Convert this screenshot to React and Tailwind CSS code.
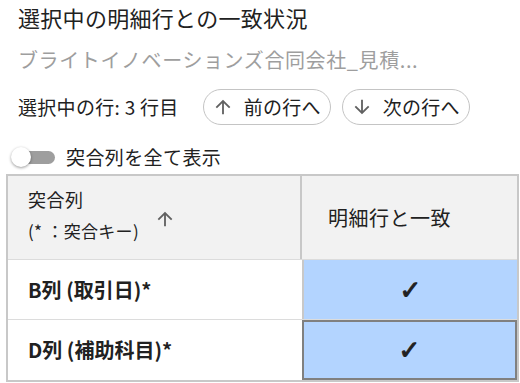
import React from 'react';

const ArrowUp = ({ className }) => (
  <svg viewBox="0 0 24 24" className={className} fill="currentColor">
    <path d="M4 12l1.41 1.41L11 7.83V20h2V7.83l5.58 5.59L20 12l-8-8-8 8z" />
  </svg>
);

const ArrowDown = ({ className }) => (
  <svg viewBox="0 0 24 24" className={className} fill="currentColor">
    <path d="M20 12l-1.41-1.41L13 16.17V4h-2v12.17l-5.58-5.59L4 12l8 8 8-8z" />
  </svg>
);

const rows = ['B列 (取引日)*', 'D列 (補助科目)*'];

export default function App() {
  return (
    <div className="w-[520px] h-[383px] bg-white text-[#212121] overflow-hidden font-['Noto_Sans_CJK_JP',sans-serif]">
      <div className="pl-[18px] pt-[2px]">
        <h1 className="text-[22px] leading-[30px] tracking-[0.3px]">選択中の明細行との一致状況</h1>
        <p className="mt-[14px] text-[20px] leading-[28px] tracking-[0.6px] text-[#9e9e9e]">ブライトイノベーションズ合同会社_見積...</p>
        <div className="mt-[15px] flex items-center">
          <span className="text-[19px] leading-[26px] tracking-[0.3px]">選択中の行: 3 行目</span>
          <button className="ml-[24px] h-[36px] w-[128px] flex items-center pl-[8px] gap-[10px] rounded-full border border-[#c4c4c4] text-[19px] tracking-[0.3px]">
            <ArrowUp className="w-[22px] h-[22px] text-[#616161]" />
            <span>前の行へ</span>
          </button>
          <button className="ml-[11px] h-[36px] w-[128px] flex items-center pl-[8px] gap-[10px] rounded-full border border-[#c4c4c4] text-[19px] tracking-[0.3px]">
            <ArrowDown className="w-[22px] h-[22px] text-[#616161]" />
            <span>次の行へ</span>
          </button>
        </div>
      </div>
      <div className="mt-[20px] ml-[10px] flex items-center h-[24px]">
        <div className="relative w-[46px] h-[20px] flex items-center">
          <div className="ml-[8px] w-[37px] h-[13px] rounded-full bg-[#9e9e9e]" />
          <div className="absolute left-[1px] top-[0px] w-[20px] h-[20px] rounded-full bg-white shadow-[0_1px_3px_rgba(0,0,0,0.4)]" />
        </div>
        <span className="ml-[10px] text-[19px] tracking-[0.4px]">突合列を全て表示</span>
      </div>
      <div className="mt-[5px] ml-[6px] w-[513px] border-2 border-[#c8c8c8]">
        <div className="grid grid-cols-[294px_1fr] bg-[#f2f2f2] h-[84px] border-b border-[#dcdcdc]">
          <div className="flex items-center pl-[20px] pb-[6px] border-r-2 border-[#c8c8c8]">
            <div className="leading-[32px]">
              <div className="text-[18px] tracking-[0.5px]">突合列</div>
              <div className="text-[17px] tracking-[0.3px]">(* ：突合キー)</div>
            </div>
            <ArrowUp className="ml-[15px] mt-[8px] w-[22px] h-[22px] text-[#616161]" />
          </div>
          <div className="flex items-center pl-[26px] text-[20px] tracking-[0.5px]">明細行と一致</div>
        </div>
        {rows.map((r, i) => (
          <div key={r} className={`grid grid-cols-[294px_1fr] h-[60px] ${i === 0 ? 'border-b border-[#dcdcdc]' : ''}`}>
            <div className="flex items-center pl-[20px] text-[20px] font-bold">{r}</div>
            <div className={`flex items-center justify-center bg-[#b3d4ff] border-l-2 ${i === 1 ? 'border-2 border-[#808080]' : 'border-[#c8c8c8]'}`}>
              <span className="text-[26px] leading-none font-['DejaVu_Sans',sans-serif] [-webkit-text-stroke:1px_#212121]">✓</span>
            </div>
          </div>
        ))}
      </div>
    </div>
  );
}
